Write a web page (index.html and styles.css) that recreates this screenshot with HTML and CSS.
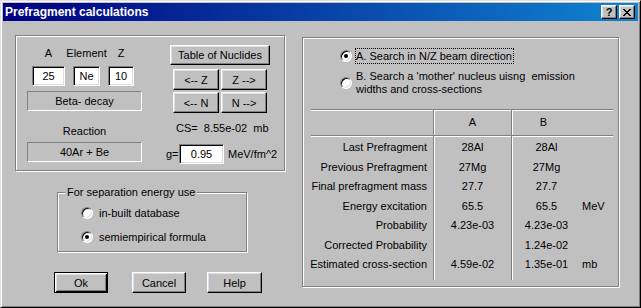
FILE: index.html
```html
<!DOCTYPE html>
<html>
<head>
<meta charset="utf-8">
<title>Prefragment calculations</title>
<link rel="stylesheet" href="styles.css">
</head>
<body>
<div class="window">
  <div class="titlebar">
    <span class="title">Prefragment calculations</span>
    <span class="capbtn help">?</span>
    <span class="capbtn close">
      <svg width="8" height="7" viewBox="0 0 8 7" shape-rendering="crispEdges"><path d="M0 0h2v1h-2z M6 0h2v1h-2z M1 1h2v1h-2z M5 1h2v1h-2z M2 2h4v1h-4z M3 3h2v1h-2z M2 4h4v1h-4z M1 5h2v1h-2z M5 5h2v1h-2z M0 6h2v1h-2z M6 6h2v1h-2z"/></svg>
    </span>
  </div>

  <div class="client">
    <div class="leftcol">
      <div class="etched nuclide">
        <div class="nuc-left">
          <div class="azgrid">
            <span>A</span><span>Element</span><span>Z</span>
            <span class="edit">25</span><span class="edit">Ne</span><span class="edit">10</span>
          </div>
          <div class="static first">Beta- decay</div>
          <div class="caption">Reaction</div>
          <div class="static">40Ar + Be</div>
        </div>
        <div class="nuc-right">
          <span class="btn wide">Table of Nuclides</span>
          <div class="btnrow">
            <span class="btn step">&lt;-- Z</span>
            <span class="btn step">Z --&gt;</span>
          </div>
          <div class="btnrow">
            <span class="btn step">&lt;-- N</span>
            <span class="btn step">N --&gt;</span>
          </div>
          <div class="cs">CS=  8.55e-02  mb</div>
          <div class="grow">
            <span class="glabel">g=</span>
            <span class="edit g">0.95</span>
            <span>MeV/fm^2</span>
          </div>
        </div>
      </div>

      <div class="etched sep">
        <span class="sep-title">For separation energy use</span>
        <div class="radio-row first"><span class="radio"></span>in-built database</div>
        <div class="radio-row"><span class="radio on"></span>semiempirical formula</div>
      </div>

      <div class="dlgbtns">
        <span class="btn push default">Ok</span>
        <span class="btn push cancel">Cancel</span>
        <span class="btn push helpbtn">Help</span>
      </div>
    </div>

    <div class="etched search">
      <div class="opt">
        <span class="radio on"></span>
        <span class="focus">A. Search in N/Z beam direction</span>
      </div>
      <div class="opt b">
        <span class="radio"></span>
        <span class="optb-text">B. Search a 'mother' nucleus uisng&nbsp; emission<br>widths and cross-sections</span>
      </div>

      <div class="tbl">
        <div class="hd"></div><div class="hd va">A</div><div class="hd va hb">B</div><div class="hd"></div>
        <div></div><div class="va"></div><div class="va"></div><div></div>

        <div class="lbl">Last Prefragment</div><div class="va">28Al</div><div class="va">28Al</div><div></div>
        <div class="lbl">Previous Prefragment</div><div class="va">27Mg</div><div class="va">27Mg</div><div></div>
        <div class="lbl">Final prefragment mass</div><div class="va">27.7</div><div class="va">27.7</div><div></div>
        <div class="lbl">Energy excitation</div><div class="va">65.5</div><div class="va">65.5</div><div class="unit">MeV</div>
        <div class="lbl">Probability</div><div class="va">4.23e-03</div><div class="va">4.23e-03</div><div></div>
        <div class="lbl">Corrected Probability</div><div class="va"></div><div class="va">1.24e-02</div><div></div>
        <div class="lbl">Estimated cross-section</div><div class="va">4.59e-02</div><div class="va">1.35e-01</div><div class="unit">mb</div>

        <div></div><div class="va"></div><div class="va"></div><div></div>
      </div>
    </div>
  </div>
</div>
</body>
</html>
```

FILE: styles.css
```css
body {
  margin: 0;
  background: #c0c0c0;
  font-family: "Liberation Sans", Arial, sans-serif;
  font-size: 11px;
  color: #000;
}

/* window frame */
.window {
  width: 641px;
  height: 308px;
  box-sizing: border-box;
  border: 1px solid;
  border-color: #dfdfdf #000 #000 #dfdfdf;
  box-shadow: inset 1px 1px #fff, inset -1px -1px #808080;
  padding: 2px;
  display: flex;
  flex-direction: column;
}

.titlebar {
  height: 18px;
  flex: none;
  display: flex;
  align-items: center;
  padding: 0 3px 0 2px;
  background: linear-gradient(to right, #000080, #1084d0);
  color: #fff;
}

.title {
  flex: 1;
  font-weight: bold;
  font-size: 12px;
}

.capbtn {
  width: 16px;
  height: 14px;
  box-sizing: border-box;
  background: #c0c0c0;
  border: 1px solid;
  border-color: #fff #000 #000 #fff;
  box-shadow: inset -1px -1px #808080, inset 1px 1px #dfdfdf;
  display: flex;
  align-items: center;
  justify-content: center;
  color: #000;
}

.capbtn.help {
  margin-right: 2px;
  font-weight: bold;
  font-size: 11px;
  line-height: 11px;
}

/* dialog body */
.client {
  display: flex;
  align-items: flex-start;
  padding: 14px 0 0 12px;
}

.leftcol {
  width: 270px;
  margin-right: 17px;
  display: flex;
  flex-direction: column;
}

.etched {
  box-sizing: border-box;
  border: 1px solid #808080;
  box-shadow: inset 1px 1px #fff, 1px 1px #fff;
}

.nuclide {
  height: 136px;
  display: flex;
  padding: 9px 0 0 11px;
}

.nuc-left {
  width: 115px;
  margin-right: 24px;
  display: flex;
  flex-direction: column;
}

.azgrid {
  display: grid;
  grid-template-columns: 33px 27px 26px;
  column-gap: 8px;
  row-gap: 6px;
  margin: 2px 0 0 5px;
  justify-items: center;
  line-height: 13px;
}

.edit {
  justify-self: stretch;
  height: 20px;
  box-sizing: border-box;
  background: #fff;
  border: 1px solid;
  border-color: #808080 #fff #fff #808080;
  box-shadow: inset 1px 1px #000, inset -1px -1px #dfdfdf;
  text-align: center;
  line-height: 18px;
}

.static {
  height: 20px;
  box-sizing: border-box;
  border: 1px solid;
  border-color: #808080 #fff #fff #808080;
  text-align: center;
  line-height: 18px;
  margin-top: 4px;
}

.static.first {
  margin-top: 5px;
}

.caption {
  margin-top: 14px;
  line-height: 13px;
  text-align: center;
}

.nuc-right {
  display: flex;
  flex-direction: column;
  align-items: flex-start;
}

.btn {
  box-sizing: border-box;
  background: #c0c0c0;
  border: 1px solid;
  border-color: #fff #000 #000 #fff;
  box-shadow: inset -1px -1px #808080, inset 1px 1px #dfdfdf;
  display: flex;
  align-items: center;
  justify-content: center;
}

.btn.wide {
  width: 100px;
  height: 20px;
  margin-left: 4px;
}

.btnrow {
  display: flex;
  gap: 2px;
  margin: 4px 0 0 7px;
}

.btnrow + .btnrow {
  margin-top: 2px;
}

.btn.step {
  width: 46px;
  height: 21px;
}

.cs {
  margin: 9px 0 0 10px;
  line-height: 13px;
  white-space: pre;
}

.grow {
  display: flex;
  align-items: center;
  margin-top: 9px;
}

.glabel {
  width: 13px;
}

.edit.g {
  width: 45px;
  margin-right: 4px;
}

/* separation energy group */
.sep {
  margin: 21px 0 0 42px;
  width: 190px;
  height: 60px;
  display: flex;
  flex-direction: column;
  align-items: flex-start;
}

.sep-title {
  margin: -7px 0 0 7px;
  padding: 0 2px;
  background: #c0c0c0;
  line-height: 13px;
}

.radio-row {
  height: 24px;
  display: flex;
  align-items: center;
  padding-left: 23px;
}

.radio-row.first {
  margin-top: 2px;
}

.radio {
  flex: none;
  width: 12px;
  height: 12px;
  box-sizing: border-box;
  border-radius: 50%;
  border: 1px solid;
  border-color: #808080 #fff #fff #808080;
  box-shadow: inset 1px 1px #000, inset -1px -1px #dfdfdf;
  background: #fff;
  margin-right: 6px;
  display: flex;
  align-items: center;
  justify-content: center;
}

.radio.on::after {
  content: "";
  width: 4px;
  height: 4px;
  border-radius: 50%;
  background: #000;
}

.dlgbtns {
  display: flex;
  margin: 20px 0 0 39px;
}

.btn.push {
  width: 54px;
  height: 21px;
}

.btn.default {
  border-color: #000;
  box-shadow: inset 1px 1px #fff, inset -1px -1px #000, inset 2px 2px #dfdfdf, inset -2px -2px #808080;
}

.btn.cancel {
  margin-left: 24px;
}

.btn.helpbtn {
  margin-left: 21px;
  width: 55px;
}

/* search group */
.search {
  width: 317px;
  height: 250px;
  margin-top: 2px;
  padding: 10px 0 0 37px;
  display: flex;
  flex-direction: column;
  align-items: flex-start;
}

.opt {
  display: flex;
  align-items: center;
}

.opt .radio {
  margin-right: 3px;
}

.focus {
  border: 1px dotted #000;
  line-height: 14px;
  padding-right: 1px;
}

.opt.b {
  margin-top: 6px;
}

.optb-text {
  line-height: 13px;
  padding-left: 1px;
}

.tbl {
  width: 302px;
  margin: 13px 0 0 -29px;
  display: grid;
  grid-template-columns: 122px 78px 70px 32px;
  grid-template-rows: 26px 2px repeat(7, 19.5px) 5px;
  border-top: 1px solid #808080;
  box-shadow: inset 0 1px #fff;
  line-height: 19.5px;
  white-space: nowrap;
}

.va {
  border-left: 1px solid #808080;
  box-shadow: inset 1px 0 #fff;
  text-align: center;
}

.hd {
  border-bottom: 1px solid #808080;
  box-shadow: 0 1px #fff;
  line-height: 25px;
}

.hd.va {
  box-shadow: inset 1px 0 #fff, 0 1px #fff;
}

.hd.hb {
  padding-right: 6px;
}

.lbl {
  display: flex;
  justify-content: flex-end;
  padding-right: 6px;
}

.unit {
  padding-left: 1px;
}
```
